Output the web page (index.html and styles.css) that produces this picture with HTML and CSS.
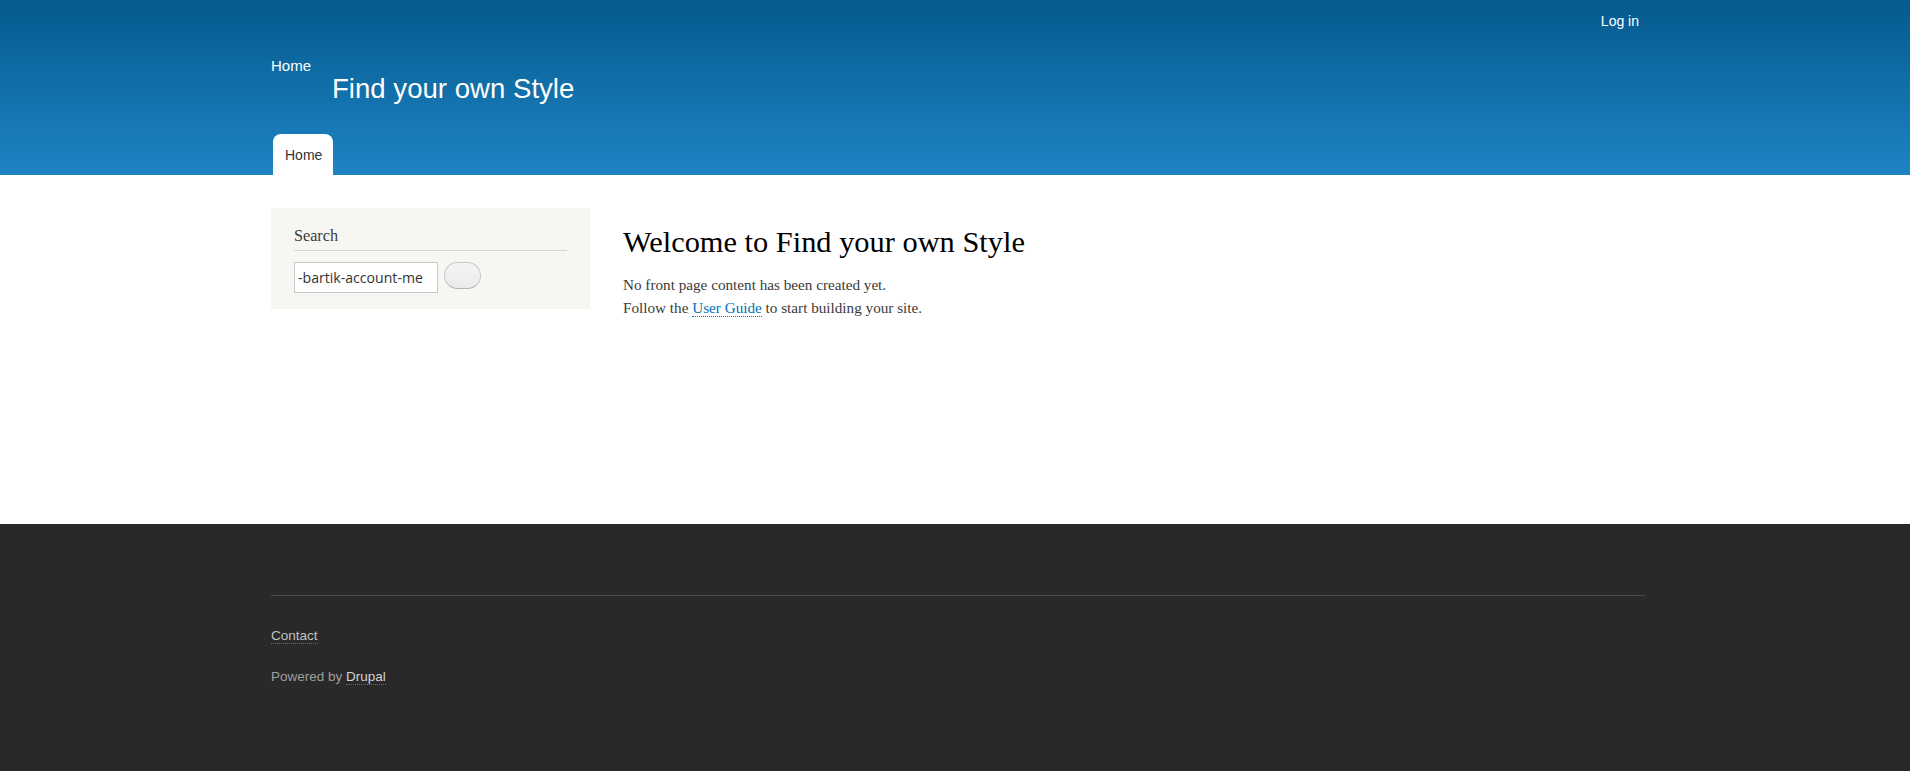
FILE: index.html
```html
<!DOCTYPE html>
<html lang="en">
<head>
<meta charset="utf-8">
<title>Find your own Style</title>
<link rel="stylesheet" href="styles.css">
</head>
<body>
<header class="header">
  <div class="container header-inner">
    <div class="secondary-menu"><a class="login" href="#">Log in</a></div>
    <div class="breadcrumb"><a href="#">Home</a></div>
    <div class="site-name"><a href="#">Find your own Style</a></div>
    <nav class="tabs"><a class="tab" href="#">Home</a></nav>
  </div>
</header>
<main class="main">
  <div class="container main-inner">
    <aside class="sidebar">
      <h2 class="block-title">Search</h2>
      <form class="search-form">
        <input class="search-input" type="search" value="-bartik-account-menu">
        <button class="search-button" type="button"></button>
      </form>
    </aside>
    <section class="content">
      <h1 class="page-title">Welcome to Find your own Style</h1>
      <p class="text">No front page content has been created yet.<br>Follow the <a class="link" href="#">User Guide</a> to start building your site.</p>
    </section>
  </div>
</main>
<footer class="footer">
  <div class="container footer-inner">
    <div class="footer-line"></div>
    <div class="footer-menu"><a class="footer-link" href="#">Contact</a></div>
    <div class="powered">Powered by <a class="footer-link drupal" href="#">Drupal</a></div>
  </div>
</footer>
</body>
</html>
```

FILE: styles.css
```css
* { box-sizing: border-box; }
html, body { margin: 0; padding: 0; }
body {
  font-family: "Liberation Serif", "Times New Roman", serif;
  color: #3b3b3b;
  background: #292929;
  min-height: 771px;
}
a { text-decoration: none; color: inherit; }

.container {
  width: 1374px;
  margin-left: 271px;
}

.header {
  height: 175px;
  background: linear-gradient(to bottom, #055a8e 0%, #1d84c3 100%);
  font-family: "Liberation Sans", Arial, sans-serif;
  color: #fffeff;
}
.header-inner {
  display: flex;
  flex-direction: column;
  height: 175px;
}
.secondary-menu {
  display: flex;
  justify-content: flex-end;
  padding-top: 11px;
  padding-right: 6px;
  height: 31px;
}
.login {
  font-size: 14px;
  line-height: 20px;
  color: #fff;
}
.breadcrumb {
  margin-top: 27px;
  font-size: 15px;
  line-height: 15px;
  height: 15px;
}
.site-name {
  margin-left: 61px;
  font-size: 27.6px;
  line-height: 32px;
  height: 32px;
}
.tabs {
  margin-top: auto;
  display: flex;
  padding-left: 2px;
}
.tab {
  display: block;
  width: 60px;
  height: 41px;
  padding: 13px 0 0 12px;
  background: #fff;
  border-radius: 8px 8px 0 0;
  color: #333;
  font-size: 14px;
  line-height: 17px;
}

.main {
  background: #fff;
  height: 349px;
}
.main-inner {
  display: flex;
  align-items: flex-start;
  padding-top: 33px;
  gap: 33px;
}
.sidebar {
  width: 319px;
  height: 101px;
  background: #f6f6f2;
  padding: 18px 23px 16px 23px;
}
.block-title {
  margin: 0;
  font-weight: normal;
  font-size: 16.2px;
  line-height: 20px;
  color: #3b3b3b;
  padding-bottom: 4px;
  border-bottom: 1px solid #d6d6d6;
}
.search-form {
  display: flex;
  align-items: flex-start;
  gap: 6px;
  margin-top: 11px;
}
.search-input {
  width: 144px;
  height: 31px;
  margin: 0;
  border: 1px solid #c7c7c7;
  background: #fff;
  padding: 0 0 0 3px;
  font-family: "Open Sans", "Noto Sans", sans-serif;
  font-size: 14.1px;
  color: #333;
  -webkit-appearance: none;
  appearance: none;
  outline: none;
  border-radius: 0;
}
.search-button {
  width: 37px;
  height: 27px;
  margin: 0;
  padding: 0;
  border: 1px solid #c8c8c8;
  border-bottom-color: #b4b4b4;
  border-radius: 14px;
  background: linear-gradient(to bottom, #f4f4f4 0%, #ebebeb 100%);
}

.content {
  padding-top: 14px;
}
.page-title {
  margin: 0;
  font-weight: normal;
  font-size: 30.4px;
  line-height: 40px;
  color: #000;
}
.text {
  margin: 11px 0 0 0;
  font-size: 15.2px;
  line-height: 23px;
  color: #3b3b3b;
}
.link {
  color: #0071b3;
  border-bottom: 1px dotted #0071b3;
}

.footer {
  background: #292929;
  height: 247px;
  font-family: "Liberation Sans", Arial, sans-serif;
}
.footer-inner {
  padding-top: 71px;
}
.footer-line {
  height: 1px;
  background: #4a4a4a;
}
.footer-menu {
  margin-top: 31px;
  font-size: 13.5px;
  line-height: 18px;
  color: #c2c2c2;
}
.powered {
  margin-top: 23px;
  font-size: 13.5px;
  line-height: 18px;
  color: #9e9e9e;
}
.footer-link {
  color: #c2c2c2;
  border-bottom: 1px dotted #6a6a6a;
}
.drupal { color: #d2d2d2; }
```
